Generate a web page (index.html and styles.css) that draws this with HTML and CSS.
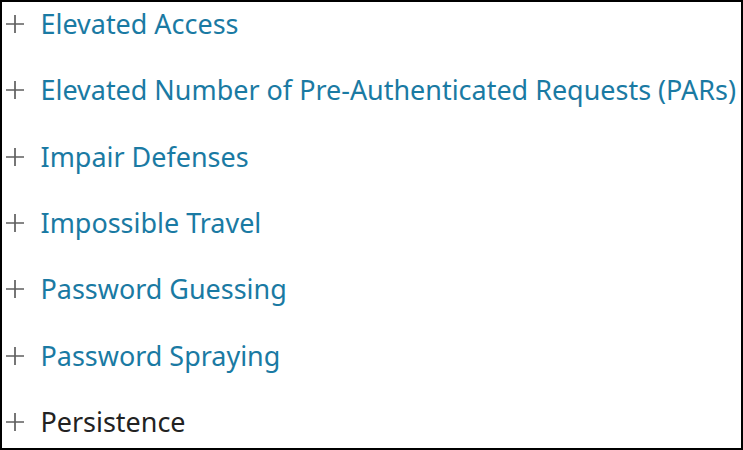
FILE: index.html
```html
<!DOCTYPE html>
<html lang="en">
<head>
<meta charset="utf-8">
<title>Detector rules</title>
<link rel="stylesheet" href="styles.css">
</head>
<body>
<div class="frame">
  <ul class="list">
    <li class="row"><svg class="plus" viewBox="0 0 18 18"><path d="M0 9H18M9 0V18"/></svg><a class="label link" href="#">Elevated Access</a></li>
    <li class="row"><svg class="plus" viewBox="0 0 18 18"><path d="M0 9H18M9 0V18"/></svg><a class="label link" href="#">Elevated Number of Pre-Authenticated Requests (PARs)</a></li>
    <li class="row"><svg class="plus" viewBox="0 0 18 18"><path d="M0 9H18M9 0V18"/></svg><a class="label link" href="#">Impair Defenses</a></li>
    <li class="row"><svg class="plus" viewBox="0 0 18 18"><path d="M0 9H18M9 0V18"/></svg><a class="label link" href="#">Impossible Travel</a></li>
    <li class="row"><svg class="plus" viewBox="0 0 18 18"><path d="M0 9H18M9 0V18"/></svg><a class="label link" href="#">Password Guessing</a></li>
    <li class="row"><svg class="plus" viewBox="0 0 18 18"><path d="M0 9H18M9 0V18"/></svg><a class="label link" href="#">Password Spraying</a></li>
    <li class="row"><svg class="plus" viewBox="0 0 18 18"><path d="M0 9H18M9 0V18"/></svg><span class="label plain">Persistence</span></li>
  </ul>
</div>
</body>
</html>
```
FILE: styles.css
```css
html, body {
  margin: 0;
  padding: 0;
  background: #fff;
}
.frame {
  box-sizing: border-box;
  width: 743px;
  height: 450px;
  border: 2px solid #000;
  overflow: hidden;
}
.list {
  list-style: none;
  margin: 0;
  padding: 5px 0 0 4px;
  display: flex;
  flex-direction: column;
  gap: 32.33px;
}
.row {
  display: flex;
  align-items: center;
  height: 34px;
  gap: 16.5px;
  white-space: nowrap;
}
.plus {
  width: 18px;
  height: 18px;
  flex: none;
  fill: none;
  stroke: #5f5f5f;
  stroke-width: 1.7;
}
.label {
  font-family: "Noto Sans", sans-serif;
  font-size: 26.95px;
  line-height: 34px;
  text-decoration: none;
}
.link { color: #1a7aa3; }
.plain { color: #222; }
```
